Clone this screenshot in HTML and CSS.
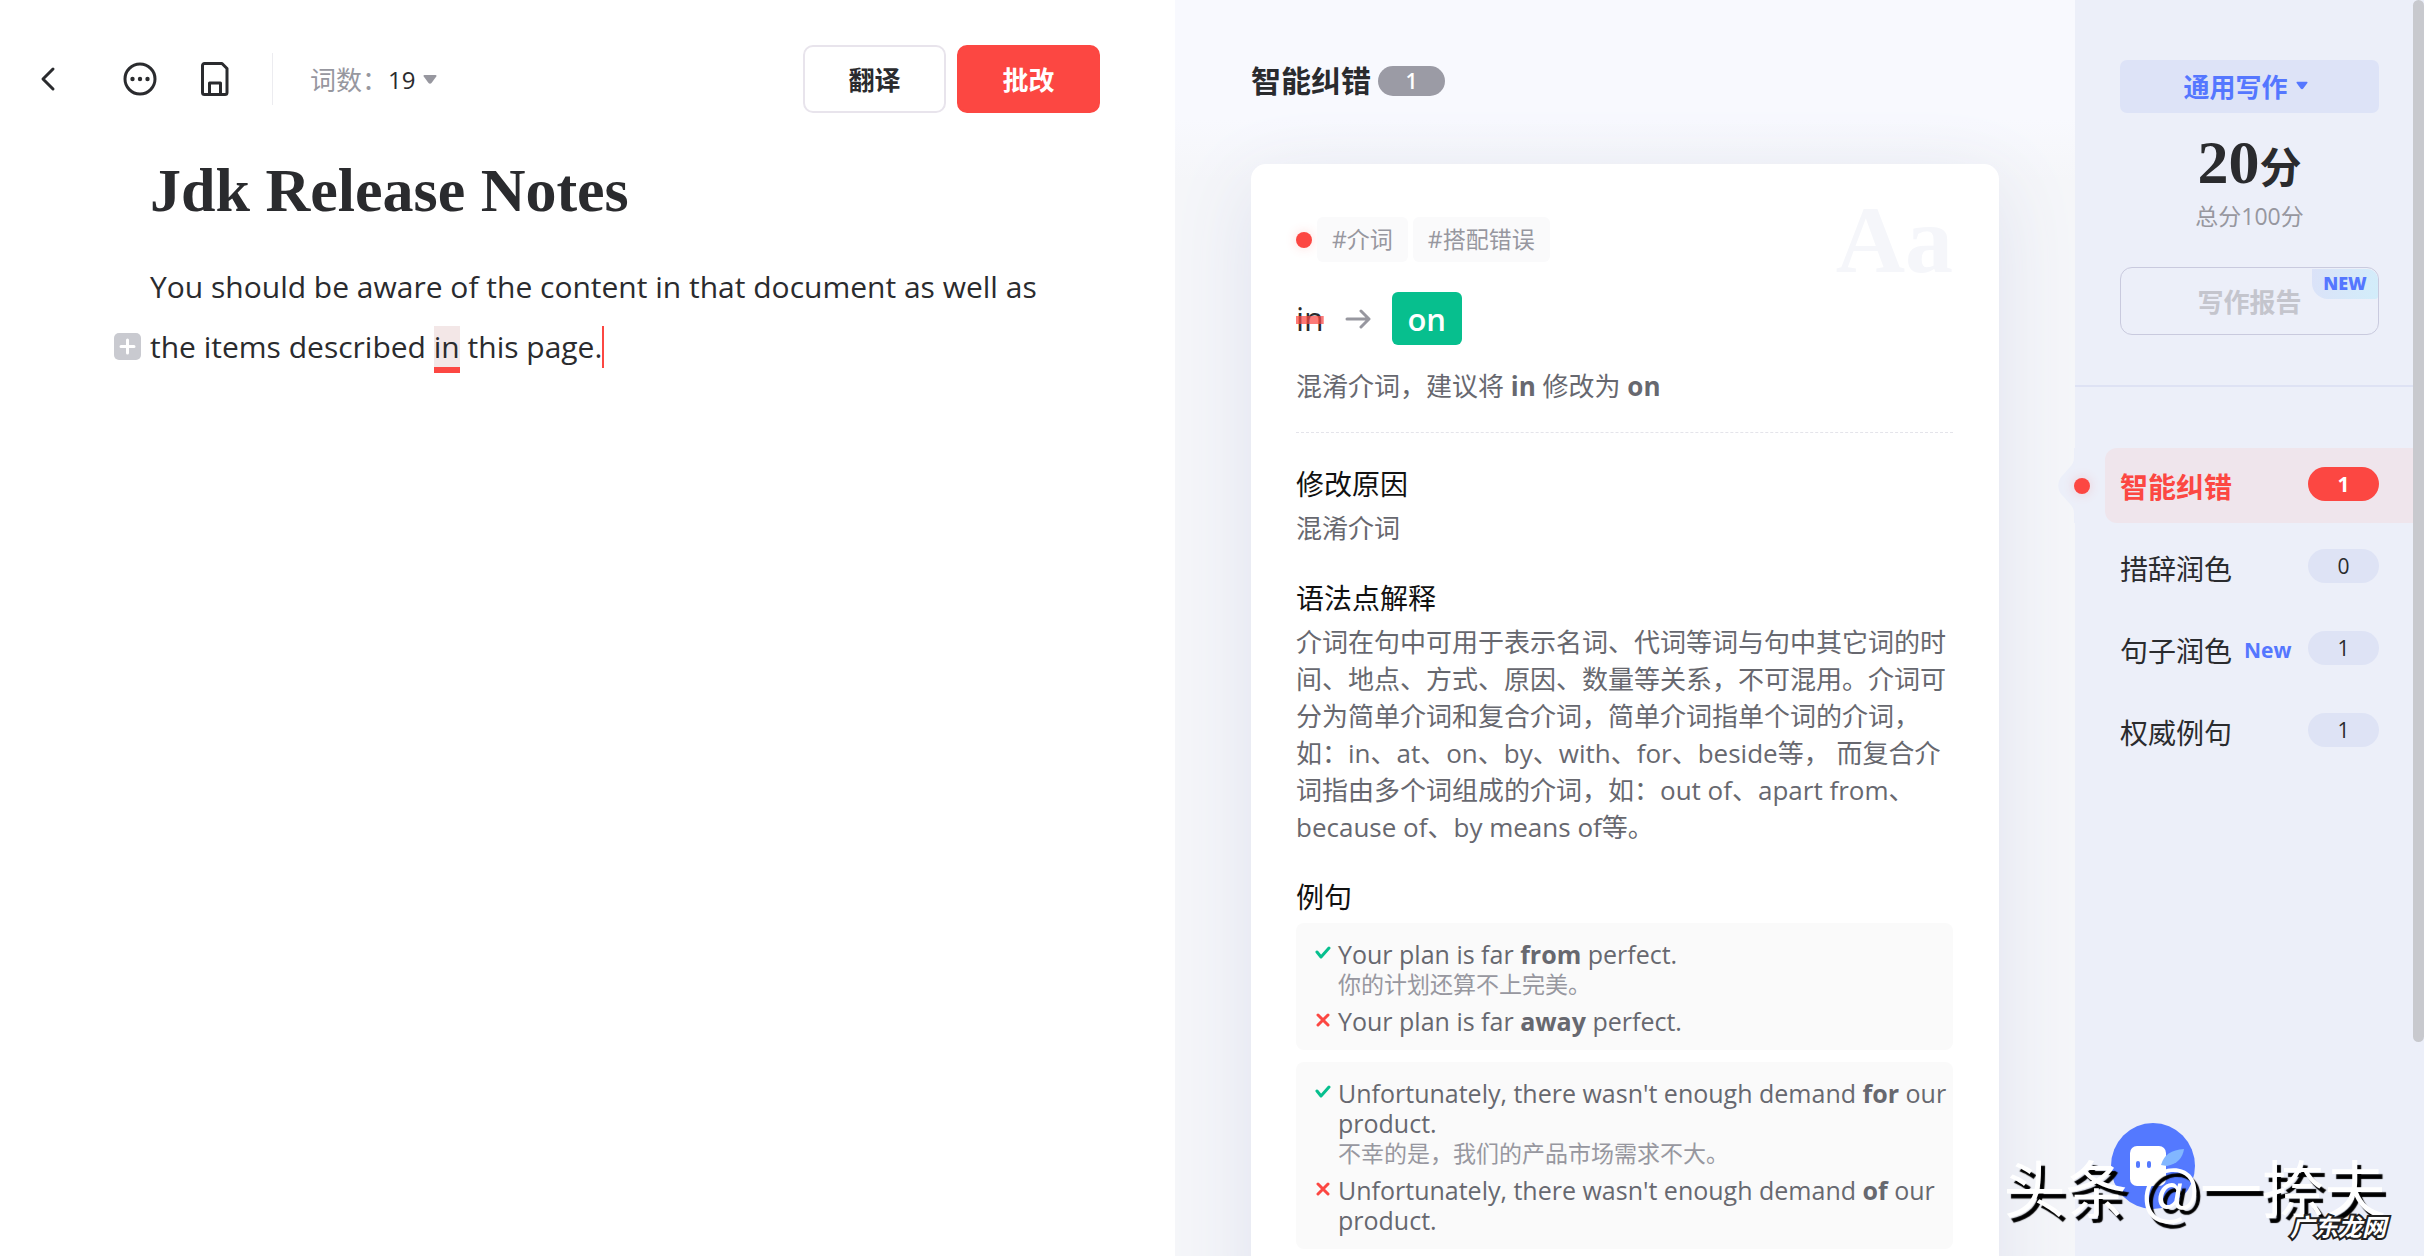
FILE: index.html
```html
<!DOCTYPE html>
<html lang="zh-CN">
<head>
<meta charset="utf-8">
<title>Jdk Release Notes</title>
<link rel="stylesheet" href="styles.css">
</head>
<body>
<div class="app">
  <main class="editor">
    <header class="toolbar">
      <button class="icon-btn back" aria-label="返回"><svg width="16" height="26" viewBox="0 0 16 26"><path d="M13 3 3 13l10 10"/></svg></button>
      <button class="icon-btn more" aria-label="更多"><svg width="34" height="34" viewBox="0 0 34 34"><circle cx="17" cy="17" r="15"/><g class="solid"><circle cx="9.500" cy="17" r="2.200"/><circle cx="17" cy="17" r="2.200"/><circle cx="24.500" cy="17" r="2.200"/></g></svg></button>
      <button class="icon-btn save" aria-label="保存"><svg width="28" height="34" viewBox="0 0 28 34"><path d="M3.500 1.500h17.500l5 5v24a2 2 0 0 1-2 2H3.500a2 2 0 0 1-2-2v-27a2 2 0 0 1 2-2zM8.500 32V21h11v11"/></svg></button>
      <span class="rule"></span>
      <button class="count"><span>词数：</span><b>19</b><svg width="14" height="9" viewBox="0 0 14 9"><path d="M1.500 0h11q1.500 0 .8 1.500L8.500 8q-1.500 1.500-3 0L.7 1.500Q0 0 1.500 0z"/></svg></button>
      <button class="btn">翻译</button>
      <button class="btn primary">批改</button>
    </header>
    <article class="doc">
      <h1>Jdk Release Notes</h1>
      <div class="para">
        <p>You should be aware of the content in that document as well as<br>the items described <mark>in</mark> this page.<i class="caret"></i></p>
        <button class="add" aria-label="添加"><svg width="27" height="27" viewBox="0 0 27 27"><rect width="27" height="27" rx="5"/><path d="M13.500 7v13M7 13.500h13"/></svg></button>
      </div>
    </article>
  </main>

  <section class="review">
    <header class="review-head"><h2>智能纠错</h2><span class="badge">1</span></header>
    <div class="review-body">
      <article class="card">
        <div class="tags"><i class="dot"></i><span class="tag">#介词</span><span class="tag">#搭配错误</span><span class="glyph">Aa</span></div>
        <div class="fix"><del>in</del><svg width="26" height="20" viewBox="0 0 26 20"><path d="M2 10h21M16 2l8 8-8 8"/></svg><button class="accept">on</button></div>
        <p class="advice">混淆介词，建议将 <b>in</b> 修改为 <b>on</b></p>
        <h3>修改原因</h3>
        <p class="text">混淆介词</p>
        <h3>语法点解释</h3>
        <p class="text">介词在句中可用于表示名词、代词等词与句中其它词的时<br>间、地点、方式、原因、数量等关系，不可混用。介词可<br>分为简单介词和复合介词，简单介词指单个词的介词，<br>如：in、at、on、by、with、for、beside等， 而复合介<br>词指由多个词组成的介词，如：out of、apart from、<br>because of、by means of等。</p>
        <h3>例句</h3>
        <div class="example">
          <div class="line"><svg class="ok" width="16" height="14" viewBox="0 0 16 14"><path d="m2 6 4 5 8-9"/></svg><p>Your plan is far <b>from</b> perfect.<small>你的计划还算不上完美。</small></p></div>
          <div class="line"><svg class="bad" width="16" height="14" viewBox="0 0 16 14"><path d="m3 2 10 10M13 2 3 12"/></svg><p>Your plan is far <b>away</b> perfect.</p></div>
        </div>
        <div class="example">
          <div class="line"><svg class="ok" width="16" height="14" viewBox="0 0 16 14"><path d="m2 6 4 5 8-9"/></svg><p>Unfortunately, there wasn't enough demand <b>for</b> our<br>product.<small>不幸的是，我们的产品市场需求不大。</small></p></div>
          <div class="line"><svg class="bad" width="16" height="14" viewBox="0 0 16 14"><path d="m3 2 10 10M13 2 3 12"/></svg><p>Unfortunately, there wasn't enough demand <b>of</b> our<br>product.</p></div>
        </div>
      </article>
    </div>
  </section>

  <aside class="side">
    <div class="summary">
      <button class="mode">通用写作<svg width="12" height="9" viewBox="0 0 14 9"><path d="M1.500 0h11q1.500 0 .8 1.500L8.500 8q-1.500 1.500-3 0L.7 1.500Q0 0 1.500 0z"/></svg></button>
      <p class="score">20<span>分</span></p>
      <p class="total">总分100分</p>
      <button class="report">写作报告<span class="new-flag">NEW</span></button>
    </div>
    <nav class="menu">
      <a class="item active" href="#errors"><svg class="notch" width="18" height="75" viewBox="0 0 18 75"><path d="M18 0h-2v10c0 4-2 7-4 9L4 28C-1 33-1 42 4 47l8 9c2 2 4 5 4 9v10h2z"/></svg><i class="dot"></i><span>智能纠错</span><b class="pill">1</b></a>
      <a class="item" href="#wording"><span>措辞润色</span><b class="pill">0</b></a>
      <a class="item" href="#sentences"><span>句子润色</span><em>New</em><b class="pill">1</b></a>
      <a class="item" href="#examples"><span>权威例句</span><b class="pill">1</b></a>
    </nav>
  </aside>
  <div class="scroll"><div class="thumb"></div></div>
</div>
<button class="bot" aria-label="助手"><svg width="84" height="86" viewBox="0 0 84 86"><ellipse cx="42" cy="43" rx="42" ry="43" fill="#5479ff"/><rect x="19" y="23" width="36" height="40" rx="7" fill="#fff"/><path d="M50 42Q54 27 73 26q-2 14-17 17z" fill="#82b7ff"/><rect x="25" y="38" width="4" height="7" rx="2" fill="#5479ff"/><rect x="36" y="38" width="4" height="7" rx="2" fill="#5479ff"/></svg></button>
<p class="mark-main">头条 @一捺夫</p>
<p class="mark-site">广东龙网</p>
</body>
</html>
```
FILE: styles.css
```css
* { box-sizing: border-box; }
body, p, h1, h2, h3 { margin: 0; }
body {
  height: 100vh;
  overflow: hidden;
  position: relative;
  background: #fff;
  color: #2a2b2e;
  font-family: "Open Sans", "Noto Sans CJK SC", sans-serif;
}
button { font: inherit; color: inherit; background: none; border: 0; padding: 0; cursor: pointer; }
svg { display: block; flex: none; }
.app { display: flex; height: 100vh; overflow: hidden; }

/* Editor */
.editor { flex: 1; min-width: 0; }
.toolbar { display: flex; align-items: center; height: 158px; padding: 0 75px 0 40px; }
.icon-btn svg { fill: none; stroke: #2a2b2e; stroke-width: 3; stroke-linecap: round; stroke-linejoin: round; }
.icon-btn .solid { fill: #2a2b2e; stroke: none; }
.back { margin-right: 67px; }
.more { margin-right: 44px; }
.save { margin-right: 43px; }
.rule { width: 1px; height: 52px; background: #ececf0; margin-right: 37px; }
.count { display: flex; align-items: center; font-size: 26px; color: #97979f; margin-right: auto; }
.count b { font-weight: 500; color: #2a2b2e; font-size: 24px; }
.count svg { margin-left: 8px; fill: #97979f; }
.btn { width: 143px; height: 68px; border: 2px solid #e8e4ec; border-radius: 10px; font-size: 26px; font-weight: 700; }
.primary { margin-left: 11px; background: #fc4742; border-color: #fc4742; color: #fff; }
.doc { padding: 0 20px 0 150px; }
.doc h1 { font: 700 62px/64px "Liberation Serif", serif; }
.para { position: relative; margin-top: 35px; }
.para p { font-size: 30px; line-height: 60px; white-space: nowrap; }
mark { background: #f3e7e7; color: inherit; border-bottom: 6px solid #fc4742; }
.caret { display: inline-block; width: 2px; height: 42px; background: #fc4742; vertical-align: -10px; }
.add { position: absolute; left: -36px; bottom: 17px; }
.add svg { fill: #c9cad0; stroke: #fff; stroke-width: 3; stroke-linecap: round; }
.add rect { stroke: none; }

/* Review column */
.review { width: 900px; flex: none; background: linear-gradient(#f8f9fe 119px, #f5f6f9 180px); }
.review-head { display: flex; align-items: center; gap: 7px; height: 119px; padding: 42px 76px 0; }
.review-head h2 { font-size: 30px; line-height: 40px; font-weight: 700; }
.review-head { height: 119px; }
.badge { width: 67px; height: 30px; border-radius: 15px; background: #9b9ba5; color: #fff; text-align: center; font-size: 21px; line-height: 30px; font-weight: 600; }
.review-body { padding: 45px 76px 0; }
.card { padding: 53px 46px 60px 45px; background: #fff; border-radius: 15px; box-shadow: 0 20px 80px #dfe2ef; }
.tags { display: flex; align-items: center; gap: 5px; height: 45px; }
.dot { width: 16px; height: 16px; border-radius: 50%; background: #fc4742; box-shadow: 0 0 12px #fc474233; flex: none; }
.tag { height: 45px; padding: 0 15px; border-radius: 6px; background: #fafafb; color: #97979f; font-size: 23px; line-height: 44px; }
.glyph { margin-left: auto; color: #f5f6fa; font: 700 96px/100px "Liberation Serif", serif; }
.fix { display: flex; align-items: center; gap: 21px; margin-top: 30px; font-size: 32px; line-height: 50px; }
.fix del { text-decoration: line-through 8px #fc4742b8; }
.fix svg { fill: none; stroke: #97979f; stroke-width: 3; stroke-linecap: round; stroke-linejoin: round; }
.accept { width: 70px; height: 53px; border-radius: 6px; background: #07bf8e; color: #fff; font-size: 31px; font-weight: 600; line-height: 50px; }
.advice { margin-top: 22px; padding-bottom: 27px; border-bottom: 1px dashed #e4e4ea; color: #67686f; font-size: 26px; line-height: 38px; }
.card h3 { margin: 31px 0 6px; color: #111; font-size: 28px; line-height: 40px; font-weight: 400; }
.text { color: #67686f; font-size: 26px; line-height: 37px; white-space: nowrap; }
.example { margin-bottom: 12px; padding: 16px 0 14px 19px; border-radius: 8px; background: #fafafa; }
.line { display: flex; gap: 7px; color: #67686f; font-size: 25px; line-height: 30px; }
.line + .line { margin-top: 7px; }
.line svg { margin-top: 7px; fill: none; stroke-width: 3; stroke-linecap: round; stroke-linejoin: round; }
.line p { white-space: nowrap; }
.ok { stroke: #07bf8e; }
.bad { stroke: #fc4742; }
.line small { display: block; color: #97979f; font-size: 23px; line-height: 30px; }

/* Sidebar */
.side { width: 338px; flex: none; background: #eceff9; }
.summary { height: 387px; padding: 60px 34px 0 45px; border-bottom: 2px solid #dee2f4; text-align: center; }
.mode { display: flex; align-items: center; justify-content: center; gap: 8px; width: 100%; height: 53px; padding: 0 8px 2px 0; border-radius: 7px; background: #dde3f7; color: #5577ff; font-size: 26px; font-weight: 700; }
.mode svg { fill: #5577ff; }
.score { margin-top: 18px; font: 700 62px/62px "Liberation Serif", "Noto Sans CJK SC", serif; }
.score span { font-size: 42px; }
.total { color: #97979f; font-size: 23px; line-height: 32px; }
.report { position: relative; width: 100%; height: 68px; margin-top: 35px; border: 1px solid #c9cade; border-radius: 12px; color: #c4c5cd; font-size: 26px; font-weight: 700; }
.new-flag { position: absolute; top: 1px; right: 0; width: 66px; height: 30px; border-radius: 0 11px 3px 16px; background: linear-gradient(100deg, #dbe2f8, #d2edfa); color: #5577ff; font-size: 18px; font-weight: 800; line-height: 29px; }
.menu { display: grid; gap: 7px; padding: 61px 0 0 30px; }
.item { position: relative; display: flex; align-items: center; height: 75px; padding: 0 34px 0 15px; border-radius: 12px 0 0 12px; color: #2a2b2e; font-size: 28px; text-decoration: none; }
.active { background: #efe5ec; color: #fc4742; font-weight: 700; }
.item .dot { position: absolute; left: -31px; top: 30px; }
.notch { position: absolute; left: -47px; top: 0; fill: #eceff9; }
.item em { margin-left: 12px; color: #5577ff; font-size: 21px; font-weight: 700; font-style: normal; }
.pill { width: 71px; height: 34px; margin: 0 0 3px auto; border-radius: 17px; background: #dee3f5; text-align: center; font-size: 21px; line-height: 34px; font-weight: 500; }
.active .pill { background: #fc4742; color: #fff; font-weight: 700; }
.scroll { width: 11px; flex: none; background: #eceff9; }
.thumb { height: 83vh; border-radius: 6px; background: #c8c9ce; }

/* Floating assistant and watermarks */
.bot { position: absolute; right: 229px; bottom: 47px; }
.mark-main { position: absolute; right: 38px; bottom: 32px; color: #fff; font: 400 62px/76px "Noto Sans CJK SC", sans-serif; white-space: pre; text-shadow: 4px 5px 1px #000; }
.mark-site { position: absolute; right: 38px; bottom: 14px; color: #fff; font: italic 700 24px/32px "Noto Sans CJK SC", sans-serif; -webkit-text-stroke: 4px #222; paint-order: stroke fill; }
```
